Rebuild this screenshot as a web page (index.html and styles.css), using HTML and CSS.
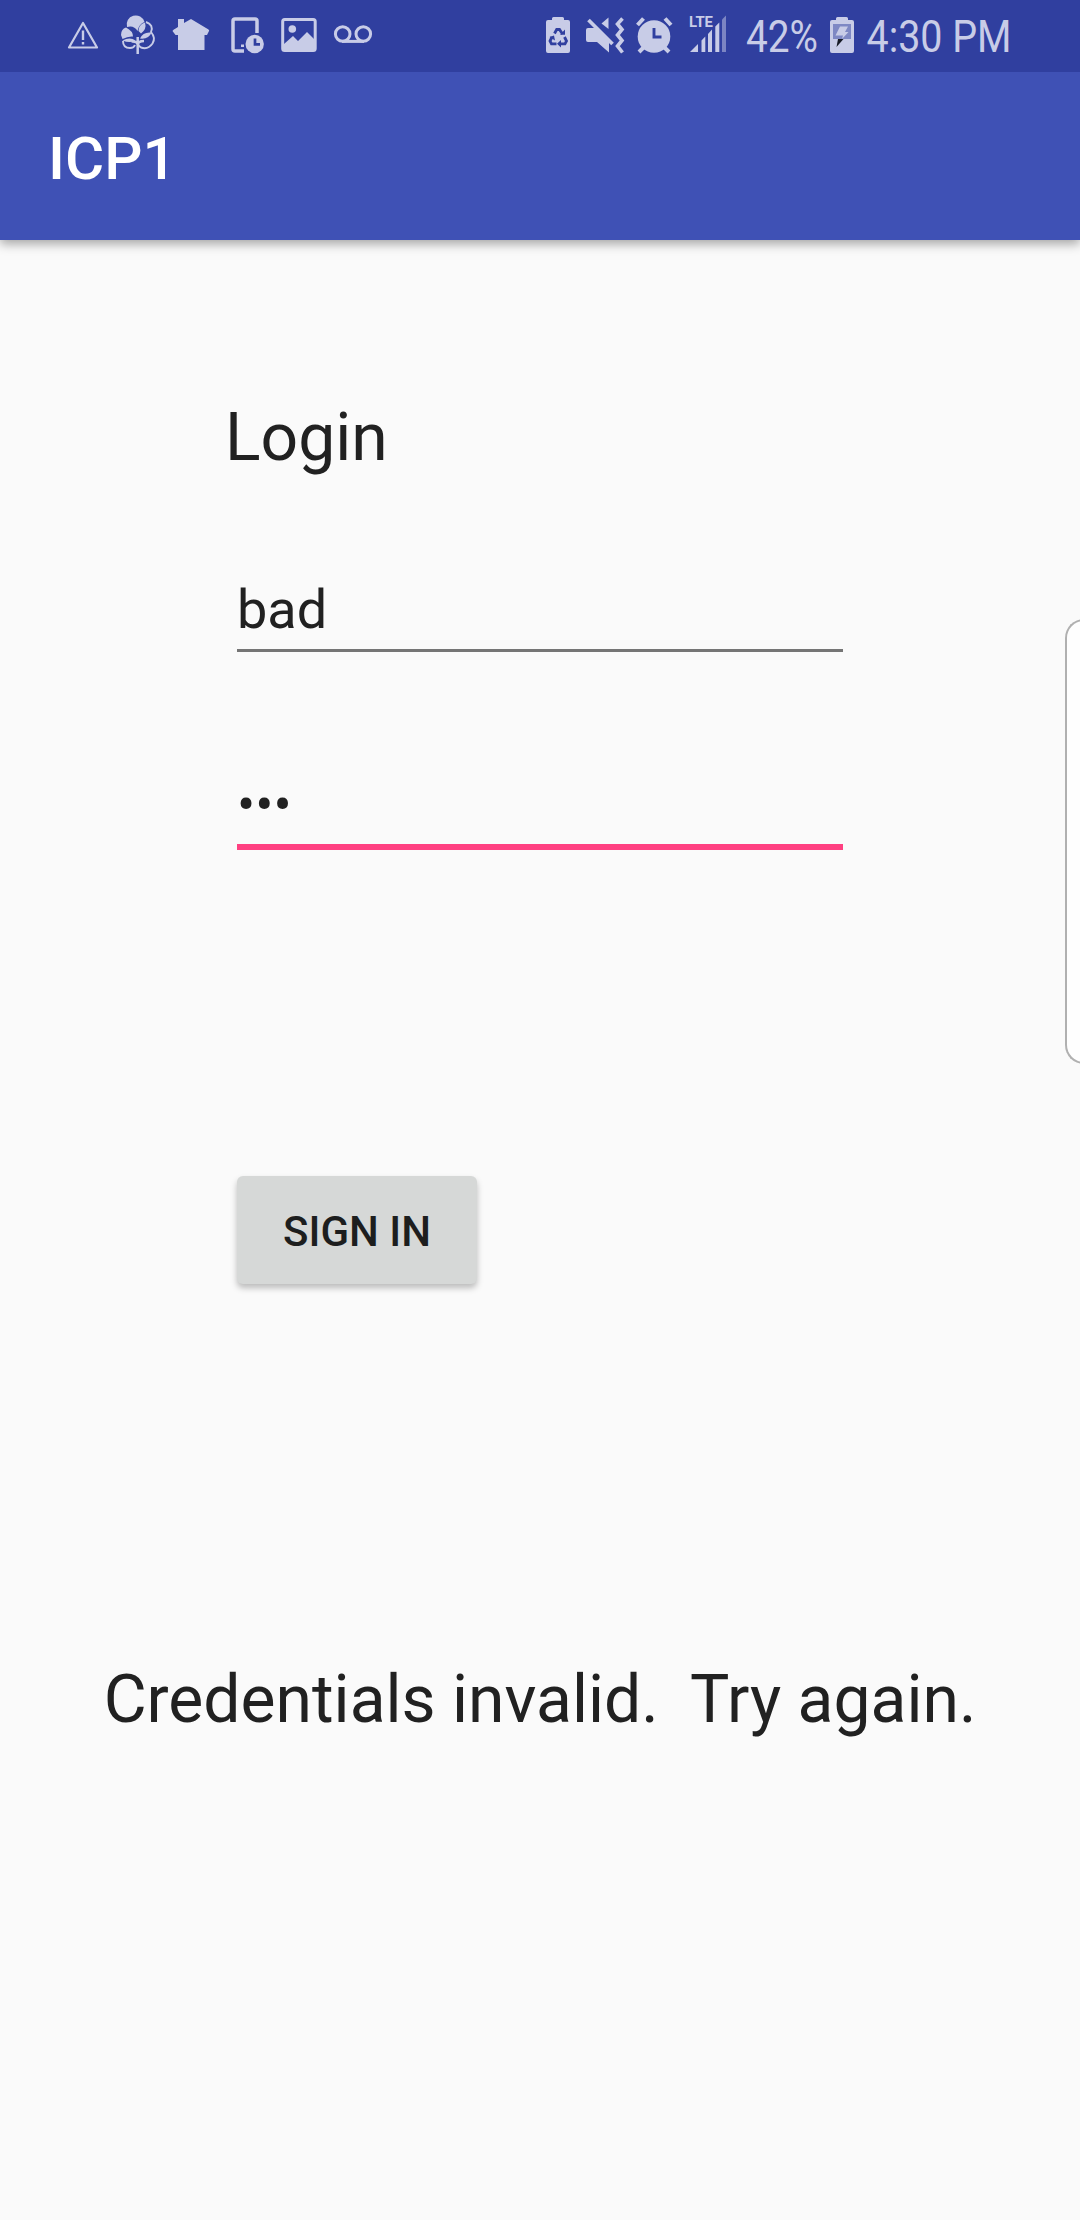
FILE: index.html
```
<!DOCTYPE html>
<html lang="en">
<head>
<meta charset="utf-8">
<title>ICP1</title>
<link rel="stylesheet" href="styles.css">
</head>
<body>
<header class="status-bar">
  <div class="status-group">
    <svg width="50" height="72" viewBox="60 0 50 72"><path class="line" stroke-width="2.2" stroke-linejoin="round" d="M83 23 L97 47.5 H69 Z"/><path class="line" stroke-width="2.4" d="M83 30.5V40M83 42V44.5"/></svg>
    <svg width="55" height="72" viewBox="110 0 55 72">
      <path class="fill" d="M127 27 A9 9 0 0 1 144.500 22 Q139 24 137.500 31 Q134 25 127 27Z"/>
      <path class="fill" d="M126 27.500 Q121 29 121 35 L122.500 39 Q128 36 133 36.500 Q133 31 126 27.500Z"/>
      <path class="fill" d="M138.500 31 Q138.500 24.500 145 22.500 Q147 29 141 33.500Z"/>
      <path class="fill" d="M140 38.500 Q143 31.500 151.500 32.500 Q149 39.500 140 38.500Z"/>
      <path class="fill" d="M122.500 40.500 Q130 36.500 135.500 40.500 Q130 43.500 122.500 40.500Z"/>
      <path class="line" stroke-width="1.900" d="M146 22Q154 25 151 32Q156 38 152.500 43.500Q148 50 141 47.500Q138 46 138 43M123 41Q123 48 130 48Q134 48 135 45"/>
      <path class="line" stroke-width="2.500" d="M137.700 37V54M131.500 41.500Q137.500 41 137.700 45Q138 41 144 41"/>
    </svg>
    <svg width="55" height="72" viewBox="165 0 55 72"><path class="fill" d="M178 19h6v4l7-4 15 9q4 2 3 3l-2 4h-2.500v15H178V35h-2.500l-3-4q0-1 5.500-4Z"/></svg>
    <svg width="52" height="72" viewBox="220 0 52 72">
      <path class="line" stroke-width="3.500" d="M257 33V21q0-2-2-2H235q-2 0-2 2V49q0 2 2 2h9"/>
      <rect class="fill" x="241" y="44.500" width="3" height="2.500"/><circle class="fill" cx="254.700" cy="44" r="9.200"/>
      <path class="cut-line" stroke-width="2.700" d="M255 38.500V44.300H260"/>
    </svg>
    <svg width="53" height="72" viewBox="272 0 53 72">
      <rect class="line" stroke-width="3" x="282.700" y="19.500" width="32.500" height="31" rx="2"/><circle class="fill" cx="292.300" cy="29" r="3.800"/>
      <path class="fill" d="M284 44l9-8 5 5 9-9 8 8V50H284Z"/>
    </svg>
    <svg width="55" height="72" viewBox="325 0 55 72"><g class="line" stroke-width="3"><circle cx="342.700" cy="34" r="7.300"/><circle cx="363.300" cy="34" r="7.300"/><path d="M342 41.400H364"/></g></svg>
  </div>
  <div class="status-group">
    <svg width="43" height="72" viewBox="535 0 43 72">
      <path class="fill" d="M552 20v-1.500q0-1.500 1.500-1.500h9q1.500 0 1.500 1.500V20h4q2 0 2 2V51q0 2-2 2H548q-2 0-2-2V22q0-2 2-2Z"/>
      <path class="cut-line" stroke-width="2.800" d="M554.500 33.500l2.200-4h2.800l3 4.500M564.500 37l2 4-1.500 2.800h-5M556.500 43.800h-5L550 41l2-4"/>
      <path class="cut" d="M560 34.800h5v-5.300ZM561 40v7.500l-4-3.700ZM549.500 37l4.500-1.500 1 5Z"/>
    </svg>
    <svg width="52" height="72" viewBox="578 0 52 72">
      <path class="fill" d="M608.500 17.500V29L601.500 23.500Z"/><path class="fill" d="M588 28h7l14 14V52.500L597 42H588q-2 0-2-2V30q0-2 2-2Z"/>
      <path class="cut-line" stroke-width="3" d="M591 17.500L615 42"/><path class="line" stroke-width="3.800" d="M588.500 20L612.500 44"/>
      <path class="line" stroke-width="3.600" d="M622.500 18.500l-5 5.500 4.500 5.500-4.500 5.500 4.500 5.500-4.500 5.500 5 6.500"/>
    </svg>
    <svg width="50" height="72" viewBox="630 0 50 72">
      <circle class="fill" cx="654" cy="36.500" r="16.300"/><path class="line" stroke-width="4" d="M637.500 25L643.500 18.500M665 18.500L671 25M644 47l-5 5M664 47l5 5"/><path class="cut-line" stroke-width="2.900" d="M654 28V37H661.500"/>
    </svg>
    <svg width="67" height="72" viewBox="680 0 67 72">
      <text class="fill lte" x="689" y="27" textLength="24" lengthAdjust="spacingAndGlyphs">LTE</text>
      <path class="fill" d="M690 52l8-8v8ZM701.500 52V40.500l3.800-4V52ZM708 52V34l4-4.500V52ZM715.300 52V26.500l4-4V52Z"/><path class="fill dim" d="M722 52V19.500l4-4V52Z"/>
    </svg>
    <svg width="75" height="72" viewBox="747 0 75 72"><text class="fill status-text" x="746" y="52" textLength="72" lengthAdjust="spacingAndGlyphs">42%</text></svg>
    <svg width="43" height="72" viewBox="822 0 43 72">
      <path class="fill" d="M836 20v-1.500q0-1.500 1.500-1.500h9q1.500 0 1.500 1.500V20h4q2 0 2 2V51q0 2-2 2H832q-2 0-2-2V22q0-2 2-2Z"/>
      <path class="shade" d="M833 24h18V39H833Z"/><path class="fill" d="M840 26.500h8l-3 5.500h3.500L842 39l1-3.500h-7.500Z"/><path class="dark" d="M838 39h5.500L836.500 47Z"/>
    </svg>
    <svg width="215" height="72" viewBox="865 0 215 72"><text class="fill status-text" x="866.500" y="52" textLength="145" lengthAdjust="spacingAndGlyphs">4:30 PM</text></svg>
  </div>
</header>
<div class="app-bar"><h1 class="app-title">ICP1</h1></div>
<main class="content">
  <form class="login">
    <h2 class="heading">Login</h2>
    <div class="field username">bad</div>
    <div class="field password">•••</div>
    <button class="sign-in" type="button">SIGN IN</button>
  </form>
  <p class="message">Credentials invalid.  Try again.</p>
</main>
<div class="edge-panel"></div>
</body>
</html>
```
FILE: styles.css
```
* { box-sizing: border-box; }
body {
  margin: 0;
  position: relative;
  width: 1080px;
  height: 2220px;
  overflow: hidden;
  background: #fafafa;
  color: #212121;
  font-family: Roboto, "Liberation Sans", sans-serif;
}
.status-bar {
  position: relative;
  display: flex;
  justify-content: space-between;
  height: 72px;
  padding-left: 60px;
  background: #303f9f;
}
.status-group { display: flex; }
.status-group svg { display: block; flex: none; overflow: visible; }
.fill { fill: #c8cce7; }
.line { fill: none; stroke: #c8cce7; }
.cut { fill: #303f9f; }
.cut-line { fill: none; stroke: #303f9f; }
.dim { opacity: .5; }
.shade { fill: #7e88c4; }
.dark { fill: #171b26; }
.lte { font-size: 15.500px; font-weight: 700; }
.status-text { font-size: 45px; }
.app-bar {
  height: 168px;
  padding: 5px 48px 0;
  background: #3f51b5;
  box-shadow: 0 4px 10px rgba(0, 0, 0, .34);
}
.app-title {
  margin: 0;
  font-size: 60px;
  line-height: 163px;
  font-weight: 500;
  color: #fff;
}
.content { padding-top: 159px; }
.login {
  display: flex;
  flex-direction: column;
  width: 618px;
  margin-left: 225px;
}
.heading {
  margin: 0 0 101px;
  font-size: 66px;
  line-height: 78px;
  font-weight: 400;
}
.field {
  margin-left: 12px;
  font-size: 54px;
  line-height: 64px;
}
.username {
  height: 74px;
  border-bottom: 3px solid #757575;
}
.password {
  height: 77px;
  margin-top: 121px;
  border-bottom: 6px solid #ff4081;
}
.sign-in {
  width: 240px;
  height: 108px;
  margin: 326px 0 0 12px;
  padding: 3px 0 0;
  border: 0;
  border-radius: 6px;
  background: #d6d8d7;
  box-shadow: 0 4px 6px rgba(0, 0, 0, .25);
  color: #1d1e1e;
  font: 500 42px/50px Roboto, "Liberation Sans", sans-serif;
}
.message {
  margin: 377px 0 0;
  font-size: 66px;
  line-height: 78px;
  text-align: center;
  white-space: pre;
}
.edge-panel {
  position: absolute;
  top: 619px;
  right: -10px;
  width: 25px;
  height: 445px;
  border: 2px solid #b0b0b0;
  border-right: 0;
  border-radius: 19px 0 0 19px;
  background: #fefefe;
}
```
